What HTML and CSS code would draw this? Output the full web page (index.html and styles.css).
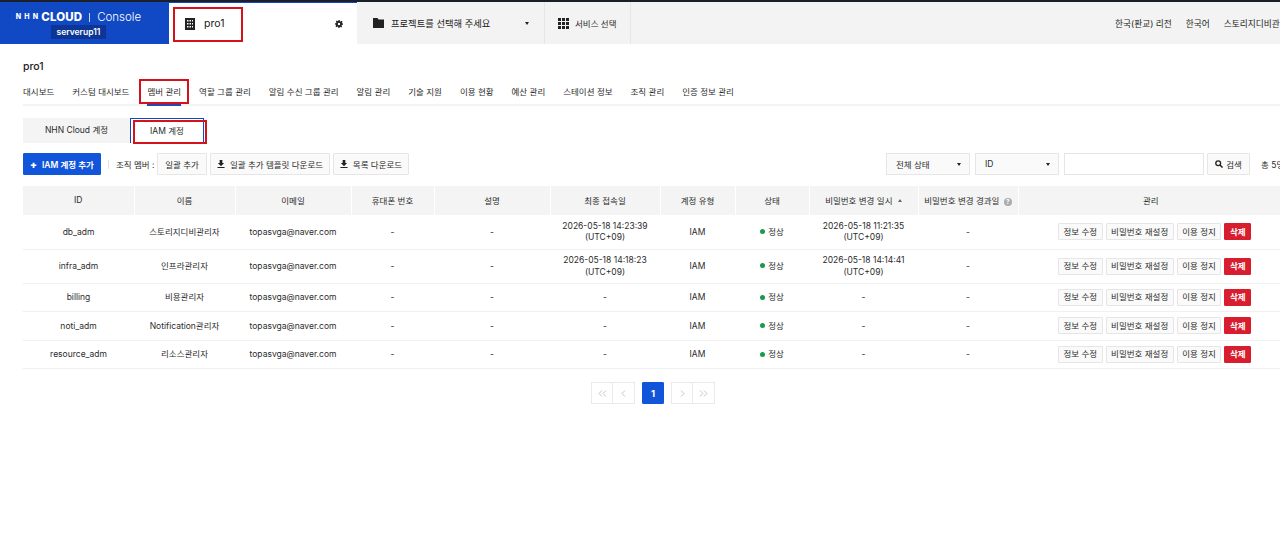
FILE: index.html
```html
<!DOCTYPE html>
<html lang="ko">
<head>
    <meta charset="UTF-8">
    <meta name="viewport" content="width=device-width, initial-scale=1.0">
    <title>NHN Cloud Console</title>
    <link rel="stylesheet" href="styles.css">
</head>
<body>
    <!-- 상단 바 -->
    <header class="topbar">
        <div class="logo">
            <div class="logo-title"><span class="logo-nhn">NHN</span><b>CLOUD</b><i></i><span>Console</span></div>
            <div class="logo-org">serverup11</div>
        </div>
        <div class="org-tab">
            <svg class="icon-org" viewBox="0 0 10 12"><path fill="#222" fill-rule="evenodd" d="M0 0h10v12H0zM2 2v1.500h1.500V2zm2.500 0v1.500H6V2zM7 2v1.500h1V2zM2 5v1.500h1.500V5zm2.500 0v1.500H6V5zM7 5v1.500h1V5zM2 8v1.500h1.500V8zm2.500 0v1.500H6V8zM7 8v1.500h1V8z"/></svg>
            <span class="org-name">pro1</span>
            <svg class="icon-gear" viewBox="0 0 12 12"><path fill="#222" fill-rule="evenodd" d="M5 0h2l.3 1.700 1.100.5L9.900 1.200l1.400 1.400-1 1.500.5 1.100L12 5v2l-1.700.3-.5 1.100 1 1.500-1.400 1.400-1.500-1-1.100.5L7 12H5l-.3-1.700-1.100-.5-1.500 1L.7 9.400l1-1.500-.5-1.100L0 7V5l1.700-.3.500-1.100-1-1.500L2.600.700l1.500 1 1.100-.5zM6 4.200a1.800 1.800 0 1 0 0 3.600 1.800 1.800 0 0 0 0-3.600z"/></svg>
        </div>
        <div class="project-select">
            <svg class="icon-folder" viewBox="0 0 11 10"><path fill="#222" d="M0 0h4.500l1 1.500H11V10H0z"/></svg>
            <span class="project-text">프로젝트를 선택해 주세요</span>
            <span class="caret"></span>
        </div>
        <div class="service-select">
            <svg class="icon-grid" viewBox="0 0 11 11"><path fill="#222" d="M0 0h3v3H0zM4 0h3v3H4zM8 0h3v3H8zM0 4h3v3H0zM4 4h3v3H4zM8 4h3v3H8zM0 8h3v3H0zM4 8h3v3H4zM8 8h3v3H8z"/></svg>
            <span>서비스 선택</span>
        </div>
        <div class="top-right">
            <span>한국(판교) 리전</span>
            <i class="top-sep"></i>
            <span>한국어</span>
            <i class="top-sep"></i>
            <span>스토리지디비관리자</span>
        </div>
    </header>

    <main class="content">
        <h1 class="page-title">pro1</h1>

        <nav class="menu">
            <a>대시보드</a>
            <a>커스텀 대시보드</a>
            <a class="active">멤버 관리</a>
            <a>역할 그룹 관리</a>
            <a>알림 수신 그룹 관리</a>
            <a>알림 관리</a>
            <a>기술 지원</a>
            <a>이용 현황</a>
            <a>예산 관리</a>
            <a>스테이션 정보</a>
            <a>조직 관리</a>
            <a>인증 정보 관리</a>
        </nav>

        <div class="sub-tabs">
            <a class="sub-tab">NHN Cloud 계정</a>
            <a class="sub-tab current">IAM 계정</a>
        </div>

        <div class="toolbar">
            <button class="btn btn-primary"><b>+</b> IAM 계정 추가</button>
            <i class="tool-sep"></i>
            <span class="tool-label">조직 멤버 :</span>
            <button class="btn btn-bulk">일괄 추가</button>
            <button class="btn btn-template">
                <svg class="icon-down" viewBox="0 0 9 9"><path fill="#222" d="M3 0h3v3.500h2L4.500 7 1 3.500h2zM.5 8h8v1h-8z"/></svg>일괄 추가 템플릿 다운로드
            </button>
            <button class="btn btn-list">
                <svg class="icon-down" viewBox="0 0 9 9"><path fill="#222" d="M3 0h3v3.500h2L4.500 7 1 3.500h2zM.5 8h8v1h-8z"/></svg>목록 다운로드
            </button>
            <div class="tool-right">
                <div class="select select-state">전체 상태<span class="caret"></span></div>
                <div class="select select-id">ID<span class="caret"></span></div>
                <div class="search-input"></div>
                <button class="btn btn-search">
                    <svg class="icon-search" viewBox="0 0 9 9"><circle cx="3.600" cy="3.600" r="2.700" fill="none" stroke="#222" stroke-width="1.500"/><path stroke="#222" stroke-width="1.700" d="M5.600 5.600L8.500 8.500"/></svg>검색
                </button>
                <span class="total">총 5명</span>
            </div>
        </div>

        <table class="members">
            <colgroup>
                <col class="c-id"><col class="c-name"><col class="c-mail"><col class="c-phone"><col class="c-desc">
                <col class="c-last"><col class="c-type"><col class="c-state"><col class="c-pw"><col class="c-days"><col class="c-manage">
            </colgroup>
            <thead>
                <tr>
                    <th>ID</th>
                    <th>이름</th>
                    <th>이메일</th>
                    <th>휴대폰 번호</th>
                    <th>설명</th>
                    <th>최종 접속일</th>
                    <th>계정 유형</th>
                    <th>상태</th>
                    <th>비밀번호 변경 일시 <span class="sort"></span></th>
                    <th>비밀번호 변경 경과일 <span class="help">?</span></th>
                    <th>관리</th>
                </tr>
            </thead>
            <tbody>
                <tr class="tall">
                    <td>db_adm</td><td>스토리지디비관리자</td><td>topasvga@naver.com</td><td>-</td><td>-</td>
                    <td>2026-05-18 14:23:39<br>(UTC+09)</td><td>IAM</td>
                    <td><span class="dot"></span>정상</td>
                    <td>2026-05-18 11:21:35<br>(UTC+09)</td><td>-</td>
                    <td><div class="actions"><button class="act">정보 수정</button><button class="act">비밀번호 재설정</button><button class="act">이용 정지</button><button class="act del">삭제</button></div></td>
                </tr>
                <tr class="tall">
                    <td>infra_adm</td><td>인프라관리자</td><td>topasvga@naver.com</td><td>-</td><td>-</td>
                    <td>2026-05-18 14:18:23<br>(UTC+09)</td><td>IAM</td>
                    <td><span class="dot"></span>정상</td>
                    <td>2026-05-18 14:14:41<br>(UTC+09)</td><td>-</td>
                    <td><div class="actions"><button class="act">정보 수정</button><button class="act">비밀번호 재설정</button><button class="act">이용 정지</button><button class="act del">삭제</button></div></td>
                </tr>
                <tr>
                    <td>billing</td><td>비용관리자</td><td>topasvga@naver.com</td><td>-</td><td>-</td>
                    <td>-</td><td>IAM</td>
                    <td><span class="dot"></span>정상</td>
                    <td>-</td><td>-</td>
                    <td><div class="actions"><button class="act">정보 수정</button><button class="act">비밀번호 재설정</button><button class="act">이용 정지</button><button class="act del">삭제</button></div></td>
                </tr>
                <tr>
                    <td>noti_adm</td><td>Notification관리자</td><td>topasvga@naver.com</td><td>-</td><td>-</td>
                    <td>-</td><td>IAM</td>
                    <td><span class="dot"></span>정상</td>
                    <td>-</td><td>-</td>
                    <td><div class="actions"><button class="act">정보 수정</button><button class="act">비밀번호 재설정</button><button class="act">이용 정지</button><button class="act del">삭제</button></div></td>
                </tr>
                <tr>
                    <td>resource_adm</td><td>리소스관리자</td><td>topasvga@naver.com</td><td>-</td><td>-</td>
                    <td>-</td><td>IAM</td>
                    <td><span class="dot"></span>정상</td>
                    <td>-</td><td>-</td>
                    <td><div class="actions"><button class="act">정보 수정</button><button class="act">비밀번호 재설정</button><button class="act">이용 정지</button><button class="act del">삭제</button></div></td>
                </tr>
            </tbody>
        </table>

        <div class="pager">
            <div class="pager-group">
                <a class="page-btn"><svg class="icon-page" viewBox="0 0 9 7"><path d="M4 .5L1 3.500l3 3M8 .5L5 3.500l3 3"/></svg></a>
                <a class="page-btn"><svg class="icon-page" viewBox="0 0 9 7"><path d="M6 .5L3 3.500l3 3"/></svg></a>
            </div>
            <a class="page-btn page-on">1</a>
            <div class="pager-group">
                <a class="page-btn"><svg class="icon-page" viewBox="0 0 9 7"><path d="M3 .5l3 3-3 3"/></svg></a>
                <a class="page-btn"><svg class="icon-page" viewBox="0 0 9 7"><path d="M1 .5l3 3-3 3M5 .5l3 3-3 3"/></svg></a>
            </div>
        </div>
    </main>

    <!-- 빨간 표시 박스 -->
    <div class="mark mark-org"></div>
    <div class="mark mark-menu"></div>
    <div class="mark mark-iam"></div>
</body>
</html>
```

FILE: styles.css
```css
* {
    box-sizing: border-box;
}

html, body {
    margin: 0;
    height: 537px;
    overflow: hidden;
}

body {
    position: relative;
    font-family: Inter, 'Noto Sans CJK KR', sans-serif;
    font-size: 8.5px;
    color: #2b2b2b;
    background-color: #fff;
}

/* 상단 바 */
.topbar {
    display: flex;
    height: 44px;
    border-top: 2px solid #1a1f2b;
    background-color: #f3f3f3;
}

.logo {
    width: 169px;
    background-color: #1148c4;
    color: #fff;
    display: flex;
    flex-direction: column;
    align-items: center;
    padding: 7px 12px 0 0;
}

.logo-title {
    display: flex;
    align-items: center;
    font-size: 11.5px;
    line-height: 16px;
    font-weight: 300;
    white-space: nowrap;
}

.logo-title b {
    font-weight: 800;
    letter-spacing: 0.1px;
}

.logo-title i {
    width: 1px;
    height: 9px;
    margin: 0 7px;
    background-color: #c8d4f2;
}

.logo-nhn {
    font-size: 7px;
    font-weight: 800;
    letter-spacing: 3.2px;
}

.logo-org {
    width: 55px;
    height: 14px;
    background-color: #0c3596;
    text-align: center;
    font-size: 8.5px;
    line-height: 14px;
    font-weight: 600;
}

.org-tab {
    width: 188px;
    background-color: #fff;
    border-top: 1px solid #1148c4;
    display: flex;
    align-items: center;
    padding: 0 14px 0 16px;
    color: #222;
}

.icon-org {
    width: 10px;
    height: 12px;
}

.org-name {
    margin-left: 9px;
    font-size: 10.5px;
    flex: 1;
}

.icon-gear {
    width: 8px;
    height: 8px;
}

.project-select {
    width: 188px;
    display: flex;
    align-items: center;
    padding: 0 15px 0 16px;
    border-right: 1px solid #e6e6e6;
    color: #222;
}

.icon-folder {
    width: 11px;
    height: 10px;
}

.project-text {
    margin-left: 7px;
    flex: 1;
    font-size: 9.3px;
}

.caret {
    width: 0;
    height: 0;
    border-left: 2.5px solid transparent;
    border-right: 2.5px solid transparent;
    border-top: 3.5px solid #222;
}

.service-select {
    width: 86px;
    display: flex;
    align-items: center;
    gap: 6px;
    padding-left: 13px;
    border-right: 1px solid #e6e6e6;
}

.icon-grid {
    width: 11px;
    height: 11px;
}

.top-right {
    flex: 1;
    display: flex;
    align-items: center;
    gap: 7px;
    padding-left: 484px;
    font-size: 8.7px;
    color: #222;
    white-space: nowrap;
    overflow: hidden;
}

.top-sep {
    width: 1px;
    height: 9px;
    background-color: #e3e3e3;
}

/* 본문 */
.content {
    padding-left: 23px;
    width: 1310px;
}

.page-title {
    margin: 16px 0 0;
    font-size: 10.5px;
    line-height: 14px;
    font-weight: 500;
    color: #222;
}

.menu {
    display: flex;
    gap: 18px;
    height: 27px;
    margin-top: 5px;
    border-bottom: 2px solid #f3f3f3;
    line-height: 18px;
    padding-top: 4px;
}

.menu a {
    height: 23px;
}

.menu .active {
    border-bottom: 2px solid #2547b4;
}

.sub-tabs {
    display: flex;
    margin-top: 12px;
    height: 25px;
}

.sub-tab {
    width: 107px;
    text-align: center;
    background-color: #f4f4f4;
    line-height: 24px;
}

.sub-tab.current {
    width: 74px;
    background-color: #fff;
    border: 1px solid #1148c4;
    border-bottom: none;
}

.toolbar {
    display: flex;
    align-items: center;
    width: 1290px;
    height: 22px;
    margin-top: 10px;
}

.btn {
    height: 22px;
    padding: 0;
    border: 1px solid #e6e6e6;
    border-radius: 1px;
    background-color: #fafafa;
    font-family: inherit;
    font-size: 8.5px;
    color: #2b2b2b;
    display: flex;
    align-items: center;
    justify-content: center;
    white-space: nowrap;
}

.btn-primary {
    width: 78px;
    background-color: #1155db;
    border-color: #1155db;
    color: #fff;
    font-weight: 600;
    gap: 5px;
}

.btn-primary b {
    font-size: 10px;
}

.tool-sep {
    width: 1px;
    height: 9px;
    margin: 0 7px;
    background-color: #e3e3e3;
}

.tool-label {
    width: 41px;
    white-space: nowrap;
}

.btn-bulk {
    width: 50px;
    margin-right: 3px;
}

.btn-template {
    width: 120px;
    margin-right: 3px;
}

.btn-list {
    width: 76px;
}

.icon-down {
    width: 8px;
    height: 8px;
    margin-right: 5px;
}

.tool-right {
    margin-left: 477px;
    display: flex;
    align-items: center;
}

.select {
    width: 84px;
    height: 22px;
    margin-right: 5px;
    border: 1px solid #e6e6e6;
    background-color: #fafafa;
    display: flex;
    align-items: center;
    justify-content: space-between;
    padding: 0 8.5px 0 9px;
}

.search-input {
    width: 140px;
    height: 22px;
    border: 1px solid #e6e6e6;
    background-color: #fff;
    margin-right: 3px;
}

.btn-search {
    width: 43px;
    margin-right: 11px;
}

.icon-search {
    width: 8px;
    height: 8px;
    margin-right: 3px;
}

.total {
    white-space: nowrap;
}

/* 테이블 */
.members {
    width: 1260px;
    margin-top: 11px;
    border-collapse: collapse;
    table-layout: fixed;
    text-align: center;
}

.c-id { width: 111px; }
.c-name { width: 101px; }
.c-mail { width: 116px; }
.c-phone { width: 83px; }
.c-desc { width: 116px; }
.c-last { width: 110px; }
.c-type { width: 75px; }
.c-state { width: 74px; }
.c-pw { width: 109px; }
.c-days { width: 100px; }
.c-manage { width: 265px; }

.members th {
    height: 29px;
    padding: 0 0 1px;
    background-color: #f4f4f4;
    border-left: 1px solid #fff;
    font-weight: 400;
    white-space: nowrap;
}

.members th:first-child {
    border-left: none;
}

.members td {
    height: 28.5px;
    padding: 1px 0 0;
    border-bottom: 1px solid #f0f0f0;
    line-height: 11.5px;
}

.members .tall td {
    height: 34px;
}

.sort {
    display: inline-block;
    width: 0;
    height: 0;
    margin: 0 0 2px 3px;
    border-left: 2px solid transparent;
    border-right: 2px solid transparent;
    border-bottom: 3px solid #666;
}

.help {
    display: inline-block;
    width: 8px;
    height: 8px;
    margin-left: 2px;
    border-radius: 50%;
    background-color: #aaa;
    color: #fff;
    font-size: 6.5px;
    line-height: 8px;
    font-weight: 700;
    vertical-align: middle;
}

.dot {
    display: inline-block;
    width: 5px;
    height: 5px;
    margin-right: 3px;
    border-radius: 50%;
    background-color: #1a9a50;
    vertical-align: 0.5px;
}

.actions {
    display: flex;
    justify-content: center;
    gap: 3px;
    margin-top: -1px;
    padding-left: 8px;
}

.act {
    height: 17px;
    padding: 0 4.5px;
    border: 1px solid #e6e6e6;
    border-radius: 1px;
    background-color: #fafafa;
    font-family: inherit;
    font-size: 8.5px;
    line-height: 14px;
    color: #2b2b2b;
    white-space: nowrap;
}

.act.del {
    background-color: #d81e2e;
    border-color: #d81e2e;
    color: #fff;
    font-weight: 600;
}

/* 페이지 */
.pager {
    display: flex;
    gap: 7px;
    margin: 13px 0 0 568px;
}

.pager-group {
    display: flex;
}

.page-btn {
    width: 22px;
    height: 22px;
    border: 1px solid #eaeaea;
    display: flex;
    align-items: center;
    justify-content: center;
}

.pager-group .page-btn + .page-btn {
    border-left: none;
}

.icon-page {
    width: 9px;
    height: 7px;
    fill: none;
    stroke: #c4c4c4;
    stroke-width: 1;
}

.page-on {
    background-color: #1155db;
    border-color: #1155db;
    color: #fff;
    font-weight: 700;
    font-size: 9.5px;
    border-radius: 1px;
}

/* 빨간 표시 박스 */
.mark {
    position: absolute;
    border: 2px solid #d3121c;
}

.mark-org {
    left: 173px;
    top: 7px;
    width: 70px;
    height: 35px;
}

.mark-menu {
    left: 139px;
    top: 79px;
    width: 50px;
    height: 25px;
}

.mark-iam {
    left: 133px;
    top: 120px;
    width: 74px;
    height: 24px;
}
```
